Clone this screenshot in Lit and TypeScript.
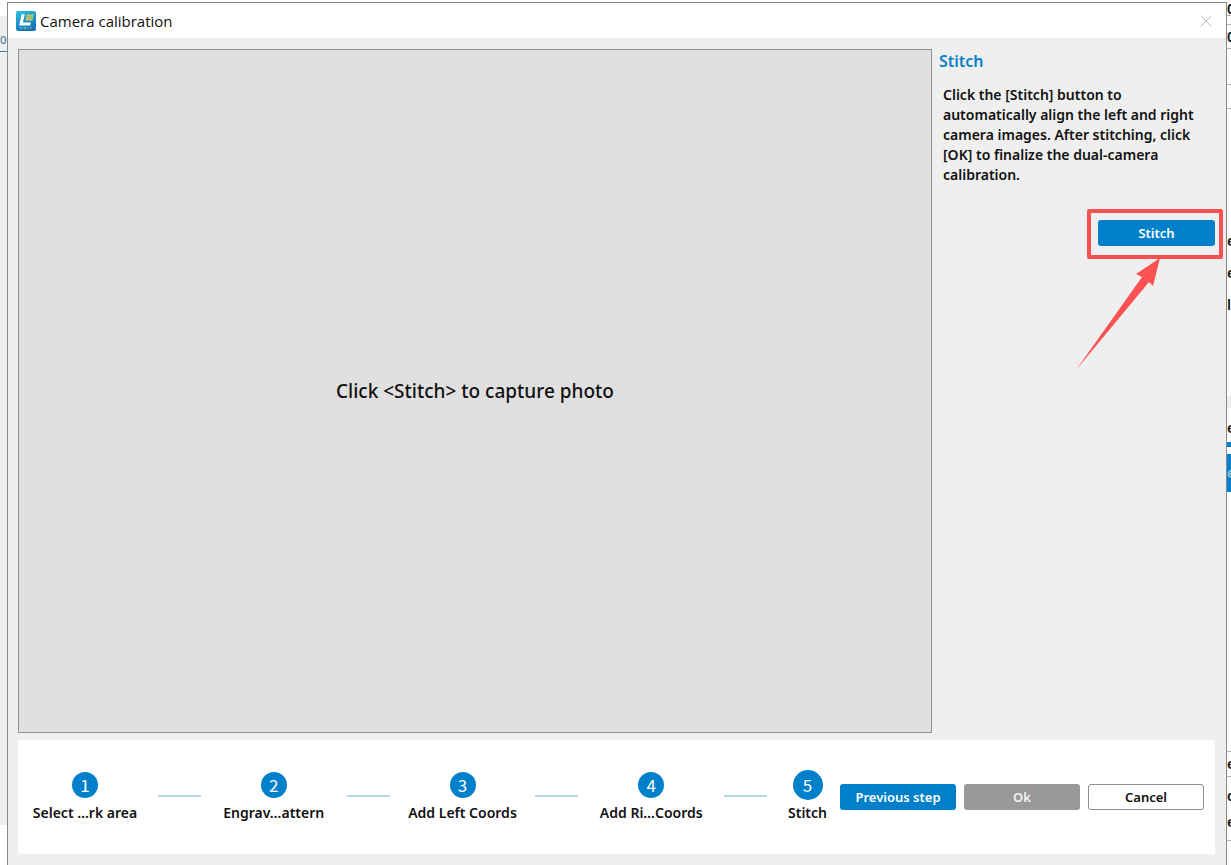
import { LitElement, html, css, svg } from "lit";
import { customElement, state } from "lit/decorators.js";

interface Step {
  label: string;
}

/** A visible sliver of the main window that sits behind the dialog. */
interface Sliver {
  h: number;
  kind?: string;
  text?: string;
}

const STEPS: Step[] = [
  { label: "Select …rk area" },
  { label: "Engrav…attern" },
  { label: "Add Left Coords" },
  { label: "Add Ri…Coords" },
  { label: "Stitch" },
];

const LEFT: Sliver[] = [
  { h: 14 },
  { h: 12, kind: "grey" },
  { h: 24, kind: "grey ruler", text: "00" },
  { h: 773, kind: "grey" },
];

const RIGHT: Sliver[] = [
  { h: 14, kind: "line", text: "0" },
  { h: 9, kind: "line" },
  { h: 24, kind: "line", text: "0" },
  { h: 36, kind: "line" },
  { h: 24, kind: "line" },
  { h: 116 },
  { h: 32, text: "e" },
  { h: 32, text: "e" },
  { h: 32, text: "l" },
  { h: 75 },
  { h: 12, kind: "grey" },
  { h: 10 },
  { h: 20, text: "e" },
  { h: 4 },
  { h: 5, kind: "blue" },
  { h: 7 },
  { h: 38, kind: "blue", text: "e" },
  { h: 260, kind: "line" },
  { h: 25, kind: "line", text: "e" },
  { h: 6 },
  { h: 26, text: "d" },
  { h: 26, text: "e" },
  { h: 6, kind: "line" },
];

const appIcon = svg`
  <svg class="app-icon" viewBox="0 0 20 20" aria-hidden="true">
    <defs>
      <linearGradient id="g" x1="0" y1="0" x2="0.4" y2="1">
        <stop offset="0" stop-color="#2fc3de" />
        <stop offset="0.5" stop-color="#1f9bce" />
        <stop offset="1" stop-color="#1673b6" />
      </linearGradient>
    </defs>
    <rect width="20" height="20" rx="2" fill="url(#g)" />
    <path d="M5.600 3.200h3.200L6.900 11.500h8l-.7 3H3.200z" fill="#fff" />
    <path d="M10.800 3.400h6.600l-1.100 6.200H9.600z" fill="#d9cd62" />
    <path d="M10.800 5.400h6M10.400 7.500h6M13 3.400l-1 6.200M15.300 3.400l-1 6.200" stroke="#5fa98c" stroke-width=".5" />
    <path d="M4 17h1.500M7.500 17H10M11.500 17h1M14 17h1.500" stroke="#c6e592" stroke-width="1" />
  </svg>`;

@customElement("app-root")
export class AppRoot extends LitElement {
  @state() private current = 4;

  static styles = css`
    :host {
      display: block;
      font-family: "Noto Sans", "Open Sans", sans-serif;
      font-weight: 600;
      font-size: 14px;
      line-height: 20px;
      color: #111;
    }
    * {
      box-sizing: border-box;
    }
    .screen {
      display: grid;
      grid-template-columns: 7px minmax(0, 1fr) 4px;
      min-height: 100vh;
      padding-top: 2px;
      background: #fff;
    }
    .dialog {
      display: flex;
      flex-direction: column;
      border: 1px solid #8a8a8a;
      border-bottom: 0;
      background: #efefef;
    }
    .titlebar {
      display: flex;
      align-items: center;
      gap: 4px;
      height: 35px;
      padding: 0 13px 0 8px;
      background: #fff;
    }
    .app-icon {
      width: 20px;
      height: 20px;
    }
    .title {
      flex: 1;
      margin: 0;
      font-family: "Open Sans", "Noto Sans", sans-serif;
      font-size: 15px;
      font-weight: 400;
    }
    .close {
      display: flex;
      padding: 0;
      border: 0;
      background: none;
    }
    .close svg {
      width: 14px;
      height: 14px;
    }
    .main {
      flex: 1;
      display: grid;
      grid-template-columns: minmax(0, 1fr) 284px;
      gap: 7px;
      padding: 11px 3px 7px 10px;
    }
    .preview {
      display: flex;
      align-items: center;
      justify-content: center;
      border: 1px solid #8f8f8f;
      background: #e0e0e0;
      font-size: 19px;
      font-weight: 500;
      line-height: 28px;
    }
    .panel-title {
      margin: 0;
      font-size: 16px;
      line-height: 24px;
      font-weight: 600;
      color: #0a7fc9;
    }
    .panel-text {
      margin: 12px 20px 24px 4px;
    }
    .callout {
      position: relative;
      width: 136px;
      margin-left: auto;
      padding: 7px 4px 9px 7px;
      border: 4px solid #fa5252;
      border-radius: 2px;
    }
    .arrow {
      position: absolute;
      top: 100%;
      right: 58px;
      width: 86px;
      height: 118px;
    }
    .btn {
      width: 116px;
      height: 26px;
      padding: 0;
      border: 1px solid transparent;
      border-radius: 3px;
      font: inherit;
      font-size: 13px;
      line-height: 20px;
      text-align: center;
    }
    .primary {
      background: #0080cb;
      color: #fff;
    }
    .disabled {
      background: #999;
      color: #f4f4f4;
    }
    .plain {
      border-color: #8f8f8f;
      background: #fff;
      color: #111;
    }
    .callout .btn {
      display: block;
      width: 100%;
    }
    .footer {
      display: flex;
      align-items: center;
      margin: 0 11px 11px 10px;
      height: 114px;
      border-radius: 2px;
      background: #fff;
    }
    .steps {
      flex: 1;
      display: flex;
      align-items: center;
      justify-content: space-between;
      margin: 0;
      padding: 0 10px 2px 12px;
      list-style: none;
    }
    .step {
      display: flex;
      flex-direction: column;
      align-items: center;
      width: 110px;
      padding-bottom: 2px;
      white-space: nowrap;
    }
    .step:last-child {
      width: 45px;
    }
    .dot-box {
      display: flex;
      align-items: center;
      height: 36px;
    }
    .dot {
      display: grid;
      place-items: center;
      width: 26px;
      height: 26px;
      border-radius: 50%;
      background: #0080cb;
      color: #fff;
      font-family: "Noto Sans CJK SC", "Noto Sans", sans-serif;
      font-size: 17px;
      font-weight: 400;
    }
    .dot.current {
      width: 30px;
      height: 30px;
    }
    .link {
      width: 43px;
      height: 2px;
      background: #b5d8e8;
    }
    .actions {
      display: flex;
      gap: 8px;
      padding-right: 11px;
    }
    .strip {
      overflow: hidden;
    }
    .sliver {
      display: flex;
      align-items: center;
      overflow: hidden;
    }
    .grey {
      background: #efefef;
    }
    .line {
      border-bottom: 1px solid #b4b4b4;
    }
    .blue {
      background: #0080cb;
      color: #8cc6ea;
    }
    .ruler {
      border-bottom: 1px solid #2b7fa8;
      color: #2b6f98;
      font-size: 11px;
      font-weight: 400;
    }
  `;

  private strip(rows: Sliver[]) {
    return html`<div class="strip" aria-hidden="true">
      ${rows.map((r) => html`<div class="sliver ${r.kind ?? ""}" style="height:${r.h}px">${r.text ?? ""}</div>`)}
    </div>`;
  }

  render() {
    return html`
      <div class="screen">
        ${this.strip(LEFT)}
        <section class="dialog" role="dialog" aria-labelledby="title">
          <header class="titlebar">
            ${appIcon}
            <h1 class="title" id="title">Camera calibration</h1>
            <button class="close" aria-label="Close">
              <svg viewBox="0 0 14 14"><path d="M1.500 1.500l11 11M12.500 1.500l-11 11" stroke="#bbb" fill="none" /></svg>
            </button>
          </header>
          <div class="main">
            <div class="preview">Click &lt;Stitch&gt; to capture photo</div>
            <aside>
              <h2 class="panel-title">Stitch</h2>
              <p class="panel-text">
                Click the [Stitch] button to automatically align the left and right camera images. After stitching, click [OK] to finalize the dual-camera calibration.
              </p>
              <div class="callout">
                <button class="btn primary">Stitch</button>
                <svg class="arrow" viewBox="0 0 86 118" aria-hidden="true">
                  <path d="M85 3L61 19l6 3L1 115 74 27l4 4z" fill="#fa5252" />
                </svg>
              </div>
            </aside>
          </div>
          <footer class="footer">
            <ol class="steps">
              ${STEPS.map(
                (s, i) => html`
                  ${i ? html`<li class="link" role="presentation"></li>` : ""}
                  <li class="step">
                    <span class="dot-box"><span class="dot ${i === this.current ? "current" : ""}">${i + 1}</span></span>
                    <span>${s.label}</span>
                  </li>`
              )}
            </ol>
            <div class="actions">
              <button class="btn primary">Previous step</button>
              <button class="btn disabled" disabled>Ok</button>
              <button class="btn plain">Cancel</button>
            </div>
          </footer>
        </section>
        ${this.strip(RIGHT)}
      </div>
    `;
  }
}
